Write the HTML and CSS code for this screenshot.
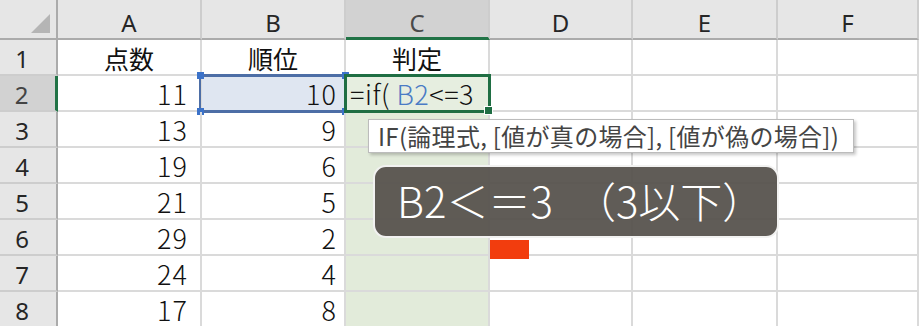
FILE: index.html
```html
<!DOCTYPE html>
<html lang="ja">
<head>
    <meta charset="UTF-8">
    <title>IF関数 入力中</title>
    <link rel="stylesheet" href="styles.css">
</head>
<body>

<div class="sheet">
    <div class="grid">
        <!-- column headers -->
        <div class="corner"><span class="corner-mark"></span></div>
        <div class="col-head">A</div>
        <div class="col-head">B</div>
        <div class="col-head selected">C</div>
        <div class="col-head">D</div>
        <div class="col-head">E</div>
        <div class="col-head">F</div>

        <!-- row 1 -->
        <div class="row-head">1</div>
        <div class="cell center">点数</div>
        <div class="cell center">順位</div>
        <div class="cell center">判定</div>
        <div class="cell"></div>
        <div class="cell"></div>
        <div class="cell"></div>

        <!-- row 2 -->
        <div class="row-head selected">2</div>
        <div class="cell num">11</div>
        <div class="cell num col-b ref">10
            <div class="ref-box">
                <span class="handle tl"></span>
                <span class="handle tr"></span>
                <span class="handle bl"></span>
                <span class="handle br"></span>
            </div>
        </div>
        <div class="cell active">
            <span class="formula">=if( <span class="ref-text">B2</span>&lt;=3</span>
            <div class="active-box"><span class="fill-handle"></span></div>
        </div>
        <div class="cell"></div>
        <div class="cell"></div>
        <div class="cell"></div>

        <!-- row 3 -->
        <div class="row-head">3</div>
        <div class="cell num">13</div>
        <div class="cell num col-b">9</div>
        <div class="cell shaded"></div>
        <div class="cell"></div>
        <div class="cell"></div>
        <div class="cell"></div>

        <!-- row 4 -->
        <div class="row-head">4</div>
        <div class="cell num">19</div>
        <div class="cell num col-b">6</div>
        <div class="cell shaded"></div>
        <div class="cell"></div>
        <div class="cell"></div>
        <div class="cell"></div>

        <!-- row 5 -->
        <div class="row-head">5</div>
        <div class="cell num">21</div>
        <div class="cell num col-b">5</div>
        <div class="cell shaded"></div>
        <div class="cell"></div>
        <div class="cell"></div>
        <div class="cell"></div>

        <!-- row 6 -->
        <div class="row-head">6</div>
        <div class="cell num">29</div>
        <div class="cell num col-b">2</div>
        <div class="cell shaded"></div>
        <div class="cell"></div>
        <div class="cell"></div>
        <div class="cell"></div>

        <!-- row 7 -->
        <div class="row-head">7</div>
        <div class="cell num">24</div>
        <div class="cell num col-b">4</div>
        <div class="cell shaded"></div>
        <div class="cell"></div>
        <div class="cell"></div>
        <div class="cell"></div>

        <!-- row 8 -->
        <div class="row-head">8</div>
        <div class="cell num">17</div>
        <div class="cell num col-b">8</div>
        <div class="cell shaded"></div>
        <div class="cell"></div>
        <div class="cell"></div>
        <div class="cell"></div>
    </div>

    <!-- function hint shown under the edited cell -->
    <div class="tooltip">IF(論理式, [値が真の場合], [値が偽の場合])</div>

    <!-- video caption -->
    <div class="caption">B2＜＝3　（3以下）</div>

    <div class="marker"></div>
</div>

</body>
</html>
```

FILE: styles.css
```css
body {
    margin: 0;
    background: #ffffff;
    overflow: hidden;
}
.sheet {
    position: relative;
    width: 919px;
    height: 326px;
    overflow: hidden;
}
.grid {
    display: grid;
    grid-template-columns: 58px 144px 144px 144px 143px 145px 141px;
    grid-template-rows: 40px repeat(8, 36px);
    font-family: "Noto Sans CJK JP", "Noto Sans", sans-serif;
    color: #111;
}

/* headers */
.corner, .col-head, .row-head {
    background: #e6e6e6;
    box-sizing: border-box;
    color: #262626;
    font-family: "Noto Sans", "Liberation Sans", sans-serif;
    font-size: 24px;
}
.corner {
    position: relative;
    border-right: 2px solid #ababab;
    border-bottom: 2px solid #ababab;
}
.corner-mark {
    position: absolute;
    right: 6px;
    bottom: 5px;
    width: 0;
    height: 0;
    border-left: 19px solid transparent;
    border-bottom: 19px solid #b5b5b5;
}
.col-head {
    display: flex;
    align-items: center;
    justify-content: center;
    padding-top: 7px;
    border-right: 2px solid #cdcdcd;
    border-bottom: 2px solid #ababab;
}
.col-head.selected {
    background: #d2d2d2;
    color: #4a4a4a;
    border-bottom: 3px solid #217346;
}
.row-head {
    display: flex;
    align-items: center;
    justify-content: center;
    padding-right: 12px;
    padding-top: 2px;
    border-right: 2px solid #ababab;
    border-bottom: 2px solid #cdcdcd;
}
.row-head.selected {
    background: #d2d2d2;
    color: #444;
    border-right: 3px solid #217346;
}

/* cells */
.cell {
    position: relative;
    box-sizing: border-box;
    border-right: 2px solid #dadada;
    border-bottom: 2px solid #dadada;
    display: flex;
    align-items: flex-end;
    font-size: 27px;
    line-height: 30px;
    padding-bottom: 1px;
}
.cell.center {
    justify-content: center;
    font-size: 25px;
}
.cell.num {
    justify-content: flex-end;
    padding-right: 12px;
    font-weight: 300;
    letter-spacing: 1px;
}
.cell.col-b {
    padding-right: 7px;
}
.cell.shaded {
    background: #e2ebda;
}

/* reference highlight around B2 */
.cell.ref {
    background: #dfe6f1;
}
.ref-box {
    position: absolute;
    left: -3px;
    right: -3px;
    top: -2px;
    bottom: -3px;
    border: 2px solid #4d6ea6;
    border-top-width: 3px;
    border-bottom-width: 3px;
}
.handle {
    position: absolute;
    width: 7px;
    height: 7px;
    background: #3b72c9;
}
.handle.tl { left: -4px; top: -5px; }
.handle.tr { right: -4px; top: -5px; }
.handle.bl { left: -4px; bottom: -5px; }
.handle.br { right: -4px; bottom: -5px; }

/* cell being edited */
.cell.active {
    background: #e6eee0;
    padding-left: 4px;
    z-index: 1;
}
.formula {
    font-weight: 300;
    white-space: nowrap;
    letter-spacing: 0.5px;
}
.ref-text {
    color: #4a7bc5;
}
.active-box {
    position: absolute;
    left: -2px;
    right: -3px;
    top: -2px;
    bottom: -3px;
    border: 3px solid #1f6e43;
}
.fill-handle {
    position: absolute;
    right: -5px;
    bottom: -5px;
    width: 7px;
    height: 7px;
    background: #1f6e43;
    border: 1px solid #fff;
}

/* overlays */
.tooltip {
    position: absolute;
    left: 368px;
    top: 119px;
    height: 34px;
    box-sizing: border-box;
    padding: 0 14px 0 9px;
    background: #fff;
    border: 1px solid #bcbcbc;
    box-shadow: 2px 2px 3px rgba(0, 0, 0, 0.22);
    font-family: "Noto Sans CJK JP", sans-serif;
    font-size: 24px;
    letter-spacing: 0.3px;
    line-height: 31px;
    color: #444;
    white-space: nowrap;
    z-index: 2;
}
.caption {
    position: absolute;
    left: 373px;
    top: 165px;
    width: 406px;
    height: 73px;
    box-sizing: border-box;
    padding-left: 22px;
    background: rgba(86, 82, 77, 0.94);
    border: 2px solid rgba(255, 255, 255, 0.92);
    border-radius: 13px;
    color: #fff;
    font-family: "Noto Sans CJK JP", sans-serif;
    font-weight: 300;
    font-size: 42px;
    line-height: 66px;
    white-space: nowrap;
    z-index: 3;
}
.marker {
    position: absolute;
    left: 490px;
    top: 240px;
    width: 39px;
    height: 19px;
    background: #f23d0e;
    z-index: 3;
}
```
